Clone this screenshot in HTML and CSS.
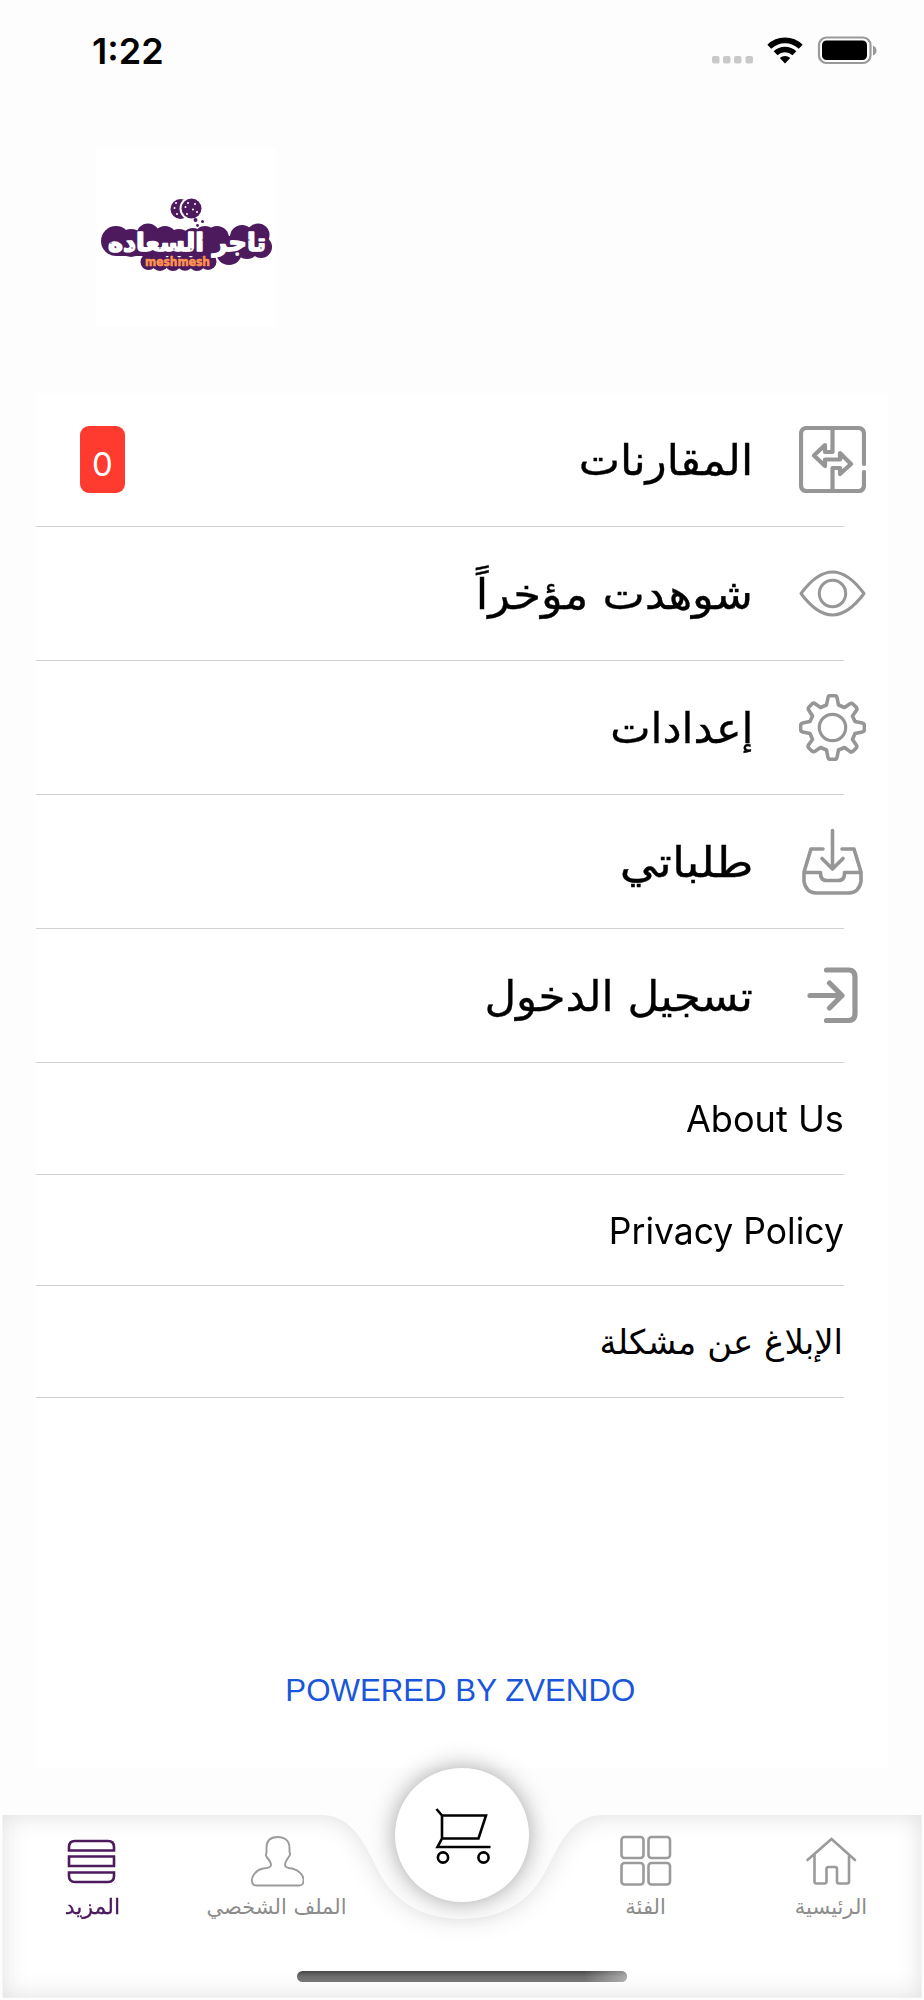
FILE: index.html
```html
<!DOCTYPE html>
<html lang="ar">
<head>
<meta charset="utf-8">
<title>المزيد</title>
<link rel="stylesheet" href="styles.css">
</head>
<body>
<div class="screen">
  <header class="status">
    <span class="clock">1:22</span>
    <svg class="status-icons" width="166" height="30" viewBox="711 35 166 30">
      <g fill="#c9c9c9"><rect x="712" y="56" width="7.500" height="7.500" rx="2"/><rect x="723" y="56" width="7.500" height="7.500" rx="2"/><rect x="734" y="56" width="7.500" height="7.500" rx="2"/><rect x="745.500" y="56" width="7.500" height="7.500" rx="2"/></g>
      <g fill="none" stroke="#000" stroke-width="5.600"><path d="M769.300 46.800a22.500 22.500 0 0 1 31.400 0"/><path d="M775.600 53.200a13.600 13.600 0 0 1 18.800 0"/></g>
      <path d="M785 63.400l-5.200-5.400a7.500 7.500 0 0 1 10.400 0z"/>
      <rect x="819" y="37.500" width="51.500" height="25.500" rx="7.500" fill="none" stroke="#999" stroke-width="2.200"/>
      <rect x="822" y="40.500" width="45" height="19.500" rx="4.500"/>
      <path d="M873 45.500q3.500 1.500 3.500 5t-3.500 5z" fill="#999"/>
    </svg>
  </header>

  <div class="brand">
    <svg width="179" height="179" viewBox="96 147 179 179">
      <g fill="#4c1a5d">
        <circle cx="180.500" cy="209" r="10"/>
        <circle cx="191" cy="208.500" r="11.500" fill="#fff"/><circle cx="191.500" cy="208.500" r="10"/>
        <circle cx="195.500" cy="220" r="2"/><circle cx="202.500" cy="221.500" r="1.500"/><circle cx="197.500" cy="225.500" r="1.400"/>
        <circle cx="116" cy="241" r="15"/><circle cx="131" cy="243" r="14"/><circle cx="148" cy="235" r="11.500"/><circle cx="165" cy="238" r="12"/><circle cx="179" cy="242" r="13"/><circle cx="193" cy="240" r="12"/><circle cx="205" cy="237" r="11"/><circle cx="217" cy="238" r="12"/><circle cx="229" cy="252" r="13"/><circle cx="242" cy="237" r="12"/><circle cx="258" cy="235" r="11.500"/><circle cx="261" cy="247" r="11"/><circle cx="247" cy="247" r="12"/>
        <rect x="116" y="236" width="140" height="20"/>
        <circle cx="148.500" cy="262" r="8"/><circle cx="160" cy="262.500" r="8.500"/><circle cx="173" cy="263" r="8"/><circle cx="185" cy="263" r="7.800"/><circle cx="197" cy="263" r="8"/><circle cx="208" cy="261.500" r="8.500"/>
      </g>
      <g fill="#fff"><circle cx="176" cy="203" r="1"/><circle cx="174.500" cy="208" r="1"/><circle cx="177" cy="214" r="1"/><circle cx="188" cy="203" r="1"/><circle cx="195" cy="204" r="1"/><circle cx="185.500" cy="207" r="1"/><circle cx="193" cy="209.500" r="1"/><circle cx="187" cy="214" r="1"/><circle cx="197" cy="212" r="1"/></g>
      <text class="logo-ar" x="187" y="251" text-anchor="middle" textLength="158" lengthAdjust="spacingAndGlyphs">تاجر السعاده</text>
      <g fill="#4c1a5d"><circle cx="111" cy="243" r=".7"/><circle cx="116" cy="238" r=".7"/><circle cx="132" cy="248" r=".7"/><circle cx="147" cy="239" r=".7"/><circle cx="160" cy="248" r=".7"/><circle cx="174" cy="249" r=".7"/><circle cx="191" cy="249" r=".7"/><circle cx="203" cy="240" r=".7"/><circle cx="214" cy="241" r=".7"/><circle cx="232" cy="246" r=".7"/><circle cx="249" cy="240" r=".7"/><circle cx="261" cy="248" r=".7"/></g>
      <text class="logo-en" x="177.500" y="266" text-anchor="middle" textLength="65" lengthAdjust="spacingAndGlyphs">meshmesh</text>
    </svg>
  </div>

  <main class="panel">
    <ul class="menu">
      <li class="row">
        <svg class="icon" viewBox="0 0 67 67"><path d="M65 38V8q0-6-6-6H8Q2 2 2 8V59q0 6 6 6H59q6 0 6-6V46M33.500 2V26H26V19L15 29.500 26 40V33.500H41V27L52 38 41 48V42H33.500V65" stroke-width="4.200"/></svg>
        <span class="label l1">المقارنات</span><span class="badge">0</span>
      </li>
      <li class="row">
        <svg class="icon" viewBox="0 0 67 67"><path d="M2 33.500Q18 12 33.500 12T65 33.500Q49 55 33.500 55T2 33.500Z" stroke-width="3"/><circle cx="33.500" cy="33.500" r="13.200" stroke-width="3"/></svg>
        <span class="label l2">شوهدت مؤخراً</span>
      </li>
      <li class="row">
        <svg class="icon" viewBox="0 0 67 67"><path d="M27.500 11L29 3.500q.4-1.900 2.400-1.900h4.200q2 0 2.400 1.900L39.500 11 45.500 13.500 51 9.800q1.700-1 3.200.4l3 3q1.300 1.500.3 3.100L53.500 22 56 27.500 63.300 29q2.100.4 2.100 2.500v4q0 2-2.100 2.400L56 39.500 53.500 45.500 57.300 51q1.100 1.700-.3 3.200l-3 3q-1.500 1.300-3.100.2L45.500 53.500 39.500 56 38 63.500q-.4 1.900-2.400 1.900h-4.200q-2 0-2.400-1.900L27.500 56 21.500 53.500 16 57.200q-1.700 1-3.200-.3l-3-3q-1.300-1.500-.3-3.100L13.500 45.500 11 39.500 3.700 38q-2.100-.4-2.100-2.500v-4q0-2 2.100-2.500L11 27.500 13.500 22 9.700 16q-1.100-1.600.3-3.100l3-3q1.500-1.300 3.200-.2L21.500 13.500Z" stroke-width="3.600"/><circle cx="33.500" cy="33.500" r="13.200" stroke-width="3.200"/></svg>
        <span class="label l3">إعدادات</span>
      </li>
      <li class="row">
        <svg class="icon" viewBox="0 0 67 67"><path d="M33.500 2.500V41M23 30.500L33.500 41 44 30.500M24 21H12L5 44V53.500q2 11 12 11.500H50q10-.5 12-11.500V44L55 21H43M5 44.500H21.500q-.5 8 6.500 8H39q7 0 6.500-8H62" stroke-width="3.600"/></svg>
        <span class="label l4">طلباتي</span>
      </li>
      <li class="row">
        <svg class="icon" viewBox="0 0 67 67"><path d="M27.500 8H49.500q6.500 0 6.500 7V51.500q0 7-6.500 7H27.500M11 33.500H43M30.500 21L43 33.500 30.500 46" stroke-width="5.200"/></svg>
        <span class="label l5">تسجيل الدخول</span>
      </li>
      <li class="row small"><span class="link a1" dir="ltr">About Us</span></li>
      <li class="row small"><span class="link a2" dir="ltr">Privacy Policy</span></li>
      <li class="row small"><span class="link a3">الإبلاغ عن مشكلة</span></li>
    </ul>
    <a class="powered">POWERED BY ZVENDO</a>
  </main>

  <nav class="tabs">
    <svg class="tabs-bg" width="924" height="260" viewBox="0 1740 924 260">
      <defs>
        <path id="bar" d="M2.500 1815H320C343 1815 355 1828 367 1849C378 1869 381 1880 396 1895C415 1913 438 1919 462 1919S509 1913 528 1895C543 1880 546 1869 557 1849C569 1828 581 1815 604 1815H921.700V1997.700H2.500Z"/>
        <clipPath id="barClip"><use href="#bar"/></clipPath>
        <filter id="soft" x="-100" y="1700" width="1124" height="400" filterUnits="userSpaceOnUse"><feGaussianBlur stdDeviation="12"/></filter>
        <filter id="glow" x="340" y="1710" width="244" height="250" filterUnits="userSpaceOnUse"><feGaussianBlur stdDeviation="12"/></filter>
        <linearGradient id="homeShade" x2="0" y2="1"><stop stop-color="#484848"/><stop offset=".5" stop-color="#6d6d6d"/><stop offset="1" stop-color="#777"/></linearGradient>
        <linearGradient id="homeEnd"><stop offset=".87" stop-color="#fff" stop-opacity="0"/><stop offset="1" stop-color="#fff" stop-opacity=".42"/></linearGradient>
      </defs>
      <use href="#bar" fill="#fff"/>
      <g clip-path="url(#barClip)"><path filter="url(#soft)" fill="#000" fill-opacity=".13" fill-rule="evenodd" d="M-90 1710H1014V2090H-90ZM2.500 1815H320C343 1815 355 1828 367 1849C378 1869 381 1880 396 1895C415 1913 438 1919 462 1919S509 1913 528 1895C543 1880 546 1869 557 1849C569 1828 581 1815 604 1815H921.700V1997.700H2.500Z"/></g>
      <circle cx="462" cy="1835" r="67" fill="#000" fill-opacity=".36" filter="url(#glow)"/>
      <circle cx="462" cy="1835" r="67" fill="#fff"/>
      <g fill="none" stroke="#000" stroke-width="2.600"><path d="M436.500 1809L442 1815.500H486L478.500 1838.500H442V1815.500M442 1838.500L437.500 1847H490.500"/><circle cx="443" cy="1857.500" r="5.100"/><circle cx="483.500" cy="1857.500" r="5.100"/></g>
      <rect x="297" y="1971" width="330" height="11" rx="5.500" fill="url(#homeShade)"/><rect x="297" y="1971" width="330" height="11" rx="5.500" fill="url(#homeEnd)"/>
    </svg>
    <a class="tab">
      <svg viewBox="804 1834 54 54"><path d="M807.500 1860L831.500 1839 855 1860M814.500 1855V1881.500q0 2 2 2H824.500q2 0 2-2V1869q0-2 2-2H835q2 0 2 2V1881.500q0 2 2 2H847q2 0 2-2V1855"/></svg>
      <span class="t1">الرئيسية</span>
    </a>
    <a class="tab">
      <svg viewBox="619 1834 54 54"><rect x="621.500" y="1837" width="22" height="21" rx="3"/><rect x="648.500" y="1837" width="21.500" height="21" rx="3"/><rect x="621.500" y="1863" width="22" height="21.500" rx="3"/><rect x="648.500" y="1863" width="21.500" height="21.500" rx="3"/></svg>
      <span class="t2">الفئة</span>
    </a>
    <span class="gap"></span>
    <a class="tab">
      <svg class="thin" viewBox="250 1834 54 54"><path d="M277.500 1837C269 1837 266.500 1842 266.500 1848V1853Q265 1855 267 1857.500Q271 1862 271 1865Q271 1868 263 1868.500C256 1870 251.800 1876 251.800 1880Q252 1885.500 256.500 1885.500H299.500Q304 1885.500 303.500 1879C303 1875 299 1870 292 1868.500Q285 1868 285 1865Q285 1862 289 1856.500Q291 1854 289.500 1852V1848C289.500 1842 286 1837 277.500 1837Z"/></svg>
      <span class="t3">الملف الشخصي</span>
    </a>
    <a class="tab active">
      <svg viewBox="66 1834 54 54"><path d="M70 1850.500V1847q0-6 6-6H109q6 0 6 6V1850.500ZM70 1856.500H115V1866H70ZM70 1872.500H115V1876q0 6-6 6H76q-6 0-6-6Z"/></svg>
      <span class="t4">المزيد</span>
    </a>
  </nav>
</div>
</body>
</html>
```
FILE: styles.css
```css
* { box-sizing: border-box; }
body { margin: 0; background: #fdfdfd; font-family: "DejaVu Sans", sans-serif; color: #000; }
.screen { width: 924px; height: 2000px; display: flex; flex-direction: column; direction: rtl; overflow: hidden; background: #fdfdfd; }
.status { direction: ltr; height: 147px; padding: 35px 47px 0 92px; display: flex; justify-content: space-between; align-items: flex-start; }
.clock { font: 600 36px/32px Inter, sans-serif; }
.brand { direction: ltr; height: 246px; padding-left: 96px; }
.brand svg { display: block; background: #fff; overflow: visible; }
.logo-ar { font: bold 25px "DejaVu Sans", sans-serif; fill: #fff; stroke: #fff; stroke-width: 1.5; stroke-linejoin: round; direction: rtl; }
.logo-en { font: bold 12.5px "DejaVu Sans", sans-serif; fill: #ff9350; stroke: #ff9350; stroke-width: .6; stroke-linejoin: round; direction: ltr; }
.panel { height: 1375px; margin: 0 36px; background: #fff; display: flex; flex-direction: column; }
.menu { list-style: none; margin: 0; padding: 0; }
.row { height: 134px; padding: 0 22px 2px 44px; display: flex; align-items: center; background: linear-gradient(#d0d0d0, #d0d0d0) left bottom / 808px 1px no-repeat; }
.icon { width: 67px; height: 67px; flex: none; fill: none; stroke: #969696; stroke-linejoin: round; stroke-linecap: round; }
.label { font-size: 42px; line-height: 60px; padding-top: 4px; margin-right: 46px; white-space: nowrap; transform-origin: right; -webkit-text-stroke: .35px #000; }
.l1 { transform: scaleX(1.043); }
.l2 { transform: scaleX(1.07); }
.l3 { transform: scaleX(1.02); }
.l4 { transform: scaleX(1.12); }
.l5 { transform: scaleX(1.037); }
.badge { margin-right: auto; width: 45px; height: 67px; border-radius: 9px; background: #ff3b30; color: #fff; font: 33px/76px Inter, sans-serif; text-align: center; }
.small { height: 111.7px; padding-right: 44px; padding-bottom: 0; }
.link { font: 37px/50px Inter, "DejaVu Sans", sans-serif; white-space: nowrap; transform-origin: right; }
.a1 { transform: scaleX(.976); }
.a2 { transform: scaleX(.96); }
.a3 { font-family: "DejaVu Sans", sans-serif; font-size: 34px; margin-right: 1px; }
.powered { direction: ltr; align-self: center; margin: 273px 1px 0 0; font: 32px/38px "Liberation Sans", sans-serif; color: #1a56db; white-space: nowrap; transform: translateX(-1px) scaleX(.976); }
.tabs { position: relative; height: 232px; padding: 66px 0 0; display: grid; grid-template-columns: 186px 185px 184px 185px 184px; }
.tabs-bg { position: absolute; left: 0; bottom: 0; }
.tab { position: relative; display: flex; flex-direction: column; align-items: center; color: #8c8c8c; font-size: 21px; line-height: 26px; white-space: nowrap; }
.tab svg { width: 54px; height: 54px; fill: none; stroke: #9b9b9b; stroke-width: 2.6; stroke-linecap: round; }
.tab .thin { stroke-width: 1.9; }
.tab span { margin-top: 6px; }
.tab .t4 { transform: scaleX(1.05); -webkit-text-stroke: .3px #4c1a5d; }
.active { color: #4c1a5d; }
.active svg { stroke: #4c1a5d; stroke-linecap: butt; }
```
